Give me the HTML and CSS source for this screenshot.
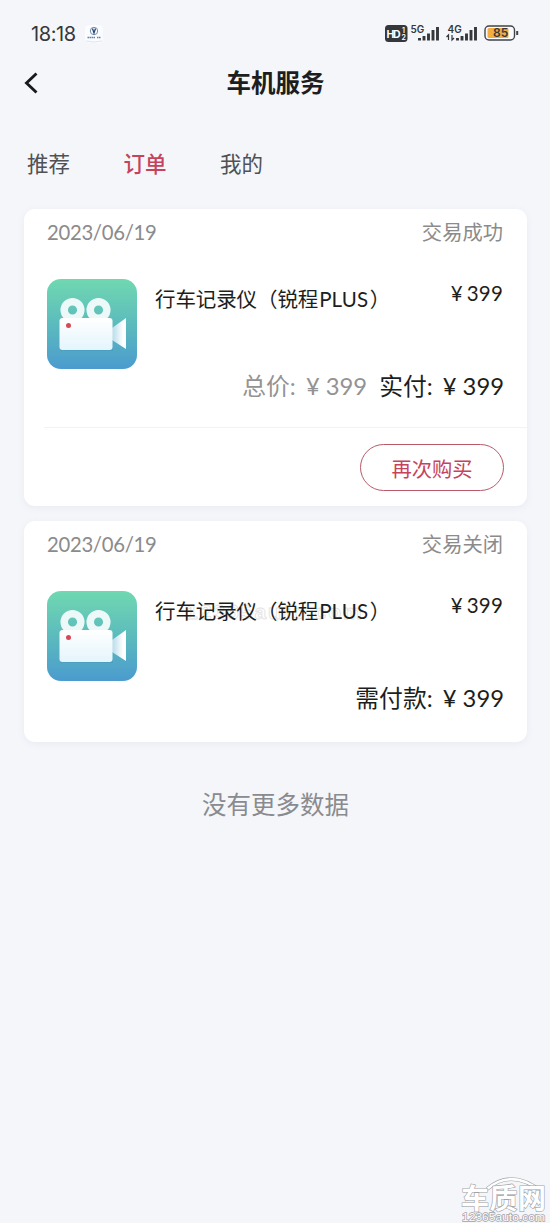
FILE: index.html
```html
<!DOCTYPE html>
<html lang="zh-CN">
<head>
<meta charset="utf-8">
<title>车机服务</title>
<link rel="stylesheet" href="styles.css">
</head>
<body>
<svg width="0" height="0" class="defs" aria-hidden="true">
  <defs>
    <linearGradient id="sky" x1="0" y1="0" x2="0" y2="1"><stop offset="0" stop-color="#70d8b1"/><stop offset=".5" stop-color="#5cbbbd"/><stop offset="1" stop-color="#4b9bcf"/></linearGradient>
    <linearGradient id="body" x1="0" y1="0" x2="0" y2="1"><stop offset="0" stop-color="#fff"/><stop offset="1" stop-color="#e4f5fc"/></linearGradient>
    <linearGradient id="lens" x1="0" y1="0" x2="1" y2="0"><stop offset="0" stop-color="#b5dbe9"/><stop offset=".8" stop-color="#fff"/></linearGradient>
    <symbol id="camera" viewBox="0 0 90 90">
      <rect width="90" height="90" rx="14" fill="url(#sky)"/>
      <path d="M13 70h51q2 0 2-2v4H13z" fill="#3b8fb4" opacity=".35"/>
      <path d="M65 49L79 39V70L65 61z" fill="url(#lens)"/>
      <circle cx="25.500" cy="31" r="8.300" fill="none" stroke="#edf9f8" stroke-width="7.500"/>
      <circle cx="51.500" cy="31" r="8.300" fill="none" stroke="#edf9f8" stroke-width="7.500"/>
      <rect x="12.500" y="39" width="53" height="32" rx="3" fill="url(#body)"/>
      <circle cx="21.500" cy="46.500" r="2.500" fill="#d64a58"/>
    </symbol>
  </defs>
</svg>
<header class="status">
  <span class="clock">18:18</span>
  <svg class="app" viewBox="0 0 18 18"><rect width="18" height="18" rx="4" fill="#fafcff"/><path d="M1 16q8 2 16 0" stroke="#dce5ef" fill="none"/><circle cx="9" cy="6" r="3.700" fill="none" stroke="#7890ad"/><path d="M7.500 3.500L9 8l1.500-4.500" fill="none" stroke="#24466f" stroke-width="1.300"/><path d="M2.500 12.500h8M12 12.500h3.500" stroke="#6680a0" stroke-width="1.500" stroke-dasharray="1.500 .5"/></svg>
  <svg class="signals" viewBox="0 0 137 22">
    <rect x="1" y="2" width="22.500" height="17" rx="3.500" fill="#35373b"/>
    <text x="2.500" y="14.500" class="hd" textLength="14">HD</text><text x="18" y="10" class="tiny">1</text><text x="17.500" y="17" class="tiny">2</text>
    <text x="26.500" y="9.500" class="net">5G</text>
    <path d="M35.500 17.500v-2.500M40 17.500v-4.500M44.500 17.500v-7M49 17.500V7M53.500 17.500V4" class="bar"/>
    <text x="63.500" y="9.500" class="net">4G</text>
    <path d="M64.500 17v-5l-2 2M68 12v5l2-2" fill="none" stroke="#35373b" stroke-width="1.200"/>
    <path d="M73.500 17.500v-2.500M78 17.500v-4.500M82.500 17.500v-7M87 17.500V7M91.500 17.500V4" class="bar"/>
    <rect x="101" y="3" width="29.500" height="14" rx="4" fill="#fafafa" stroke="#414348" stroke-width="1.400"/>
    <rect x="103.500" y="5" width="21" height="10" rx="1.500" fill="#f3ad43"/>
    <text x="109" y="14.300" class="pct">85</text>
    <path d="M133.200 8v4" stroke="#414348" stroke-width="2"/>
  </svg>
</header>
<nav class="title">
  <svg class="back" viewBox="0 0 14 22"><path d="M12.500 1.500L2.500 11l10 9.500" fill="none" stroke="#17191c" stroke-width="2.900"/></svg>
  <h1>车机服务</h1>
</nav>
<nav class="tabs"><span>推荐</span><span class="active">订单</span><span>我的</span></nav>
<main>
  <article class="card paid">
    <div class="meta"><time>2023/06/19</time><span>交易成功</span></div>
    <div class="product"><svg class="thumb"><use href="#camera"/></svg><h2>行车记录仪（锐程<span>PLUS</span>）</h2><span class="price"><i>¥</i>399</span></div>
    <div class="sum"><span class="total">总价: <b><i>¥</i>399</b></span><span>实付: <b><i>¥</i>399</b></span></div>
    <div class="actions"><button>再次购买</button></div>
  </article>
  <article class="card closed">
    <div class="meta"><time>2023/06/19</time><span>交易关闭</span></div>
    <div class="product"><span class="ghost">12365auto.com</span><svg class="thumb"><use href="#camera"/></svg><h2>行车记录仪（锐程<span>PLUS</span>）</h2><span class="price"><i>¥</i>399</span></div>
    <div class="sum"><span>需付款: <b><i>¥</i>399</b></span></div>
  </article>
  <p class="end">没有更多数据</p>
</main>
<svg class="watermark" viewBox="0 0 90 48">
  <path d="M28 14Q53-7 83 17" fill="none" stroke="#a0a2a7" stroke-width="3.600"/>
  <path d="M28 14Q53-7 83 17" fill="none" stroke="#fff" stroke-width="2.600"/>
  <text x="2" y="34" textLength="85" class="brand">车质网</text>
  <text x="3" y="46" textLength="83" lengthAdjust="spacingAndGlyphs" class="site">12365auto.com</text>
</svg>
</body>
</html>
```
FILE: styles.css
```css
* { box-sizing: border-box; }
body {
  margin: 0;
  height: 1223px;
  position: relative;
  overflow: hidden;
  background: #f4f6fa;
  color: #1d1e20;
  font-family: Lato, "Noto Sans CJK SC", sans-serif;
}
h1, h2, p { margin: 0; }
i, b { font-style: normal; font-weight: 400; }
.defs { position: absolute; }
.status { display: flex; align-items: center; height: 56px; padding: 13px 29px 1px 31px; }
.clock { width: 54px; font: 20px/24px Inter, sans-serif; letter-spacing: -.4px; color: #35373b; }
.app { width: 18px; height: 18px; }
.signals { width: 137px; height: 22px; margin-left: auto; }
.signals text { font-family: Inter, sans-serif; font-weight: 600; fill: #35373b; }
.signals .hd { font-size: 10.5px; font-weight: 700; fill: #fff; }
.signals .tiny { font-size: 7px; fill: #fff; }
.signals .net { font-size: 10px; }
.signals .pct { font-size: 12px; }
.bar { fill: none; stroke: #35373b; stroke-width: 2.9; }
.title { display: flex; align-items: center; height: 54px; padding: 0 24px; }
.back { width: 14px; height: 22px; }
h1 { flex: 1; padding-right: 13px; text-align: center; font-size: 24.5px; line-height: 36px; font-weight: 700; }
.tabs { display: flex; gap: 53.500px; height: 99px; padding: 38px 27px 0; font-size: 21.5px; line-height: 32px; color: #505155; }
.tabs .active { color: #c6435c; font-weight: 500; }
main { padding: 0 23px 0 24px; }
.card { background: #fff; border-radius: 11px; box-shadow: 0 2px 7px #e9ebf2; }
.paid { height: 297px; margin-bottom: 15px; }
.closed { height: 221px; }
.meta { display: flex; justify-content: space-between; height: 70px; padding: 8px 24px 0 23px; font-size: 20.3px; line-height: 30px; color: #8b8b8b; }
.meta time { letter-spacing: -.3px; }
.product { display: flex; align-items: flex-start; position: relative; height: 90px; padding: 0 24px 0 23px; }
.thumb { width: 90px; height: 90px; margin-right: 18px; }
h2 { position: relative; padding-top: 5px; font-size: 20.500px; line-height: 30px; font-weight: 400; white-space: nowrap; letter-spacing: -.1px; }
h2 span { display: inline-block; width: 50.500px; margin-left: 1px; font-size: 20.500px; letter-spacing: .1px; }
.price { margin-left: auto; margin-top: -1px; font-size: 20.500px; line-height: 30px; letter-spacing: .2px; }
.price i { margin-right: 4px; }
.ghost { position: absolute; left: 162px; top: 8px; font: 600 21px/26px "Liberation Sans", sans-serif; letter-spacing: 2px; color: #fff; -webkit-text-stroke: .8px #e2e2e2; }
.sum { display: flex; justify-content: flex-end; gap: 12px; padding: 0 23px 0 0; font-size: 23.8px; line-height: 34px; }
.sum i { margin: 0 6px 0 4px; }
.total { color: #939393; }
.actions { display: flex; justify-content: flex-end; margin: 24px 0 0 20px; padding: 16px 23px 0 0; border-top: 1px solid #f3f3f3; }
button { width: 144px; height: 47px; padding: 0; border: 1.500px solid #b95969; border-radius: 24px; background: #fff; color: #c6435c; font: 20.3px/30px "Noto Sans CJK SC", sans-serif; }
.end { padding-top: 45px; text-align: center; font-size: 24.5px; line-height: 36px; color: #8a8b8e; }
.watermark { position: absolute; right: 1px; bottom: 0; width: 90px; height: 48px; }
.watermark text { fill: #fff; stroke: #a0a2a7; paint-order: stroke; }
.watermark .brand { font-family: "Noto Sans CJK SC", sans-serif; font-size: 28px; font-weight: 700; stroke-width: 1.200px; }
.watermark .site { font-family: "Liberation Sans", sans-serif; font-size: 11px; stroke-width: 1.300px; }
```
